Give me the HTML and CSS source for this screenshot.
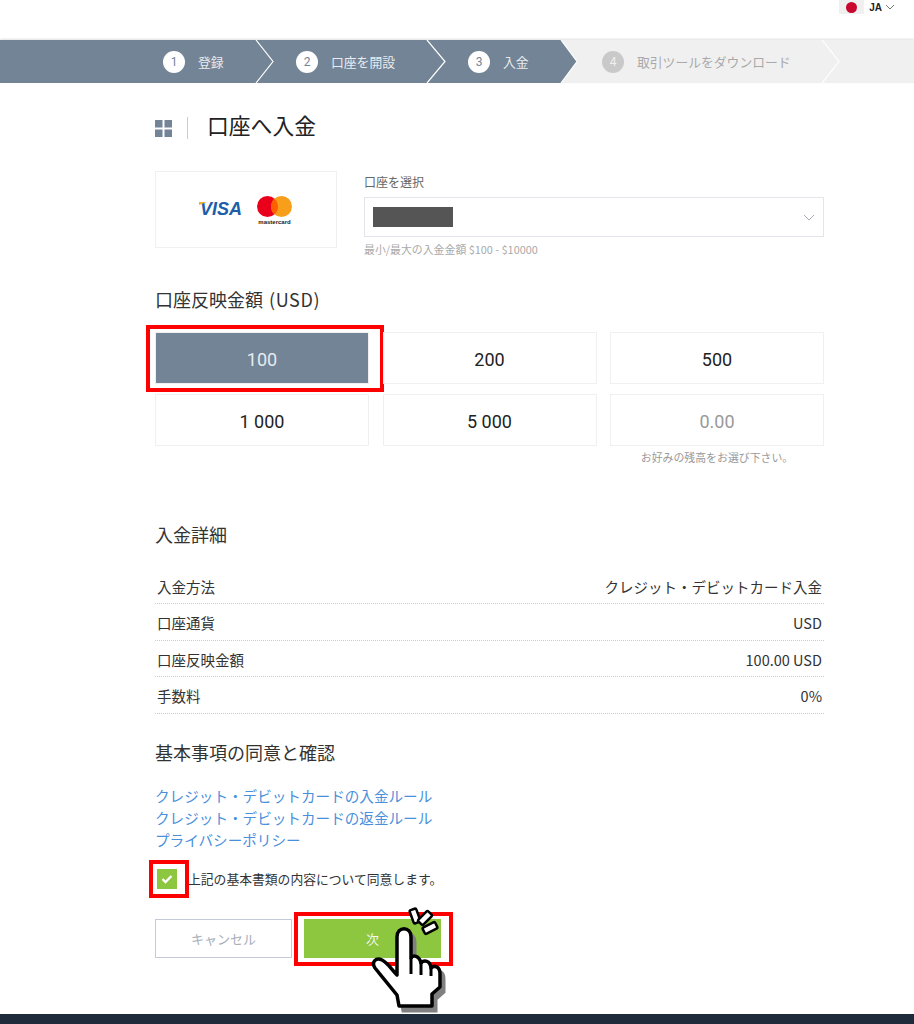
FILE: index.html
```html
<!DOCTYPE html>
<html lang="ja">
<head>
  <meta charset="UTF-8">
  <title>口座へ入金</title>
  <link rel="stylesheet" href="styles.css">
</head>
<body>
  <header class="topbar">
    <div class="lang">
      <span class="flag"><span class="flag-dot"></span></span>
      <span class="lang-code">JA</span>
      <svg class="lang-caret" width="10" height="6" viewBox="0 0 10 6"><path d="M1 1l4 4 4-4" fill="none" stroke="#777" stroke-width="1"/></svg>
    </div>
  </header>

  <!-- Step bar -->
  <nav class="steps">
    <svg class="steps-bg" width="914" height="43" viewBox="0 0 914 43">
      <rect width="914" height="43" fill="#f0f0f0"/>
      <path d="M0 0H561L577 21.5 561 43H0Z" fill="#738496"/>
      <path d="M256 0L273 21.5 256 43M427 0L445 21.5 427 43M561 0L577 21.5 561 43M822 0L839 21.5 822 43" fill="none" stroke="#fff" stroke-width="1.2"/>
    </svg>
    <div class="step step-1"><span class="step-num">1</span><span>登録</span></div>
    <div class="step step-2"><span class="step-num">2</span><span>口座を開設</span></div>
    <div class="step step-3"><span class="step-num">3</span><span>入金</span></div>
    <div class="step step-4 is-off"><span class="step-num">4</span><span>取引ツールをダウンロード</span></div>
  </nav>

  <main class="content">
    <div class="page-title">
      <svg class="title-icon" width="17" height="17" viewBox="0 0 17 17" fill="#738496">
        <rect width="7.5" height="7.5"/><rect x="9.5" width="7.5" height="7.5"/>
        <rect y="9.5" width="7.5" height="7.5"/><rect x="9.5" y="9.5" width="7.5" height="7.5"/>
      </svg>
      <span class="title-sep"></span>
      <h1>口座へ入金</h1>
    </div>

    <section class="account">
      <div class="card-logos">
        <span class="visa">VISA</span>
        <div class="mc">
          <svg width="35" height="21" viewBox="0 0 35 21">
            <circle cx="10.500" cy="10.500" r="10.500" fill="#eb001b"/>
            <circle cx="24.500" cy="10.500" r="10.500" fill="#f79e1b"/>
            <path d="M17.500 2.700a10.500 10.500 0 0 1 0 15.600a10.500 10.500 0 0 1 0-15.600Z" fill="#ff5f00"/>
          </svg>
          <span class="mc-name">mastercard</span>
        </div>
      </div>
      <div class="account-form">
        <label class="field-label">口座を選択</label>
        <div class="select">
          <span class="masked"></span>
          <svg width="12" height="7" viewBox="0 0 12 7"><path d="M1 1l5 5 5-5" fill="none" stroke="#aab" stroke-width="1"/></svg>
        </div>
        <p class="hint">最小/最大の入金金額 $100 - $10000</p>
      </div>
    </section>

    <h2 class="amount-heading">口座反映金額 <span class="amount-unit">(USD)</span></h2>
    <div class="amounts">
      <div class="tile is-selected">100<span class="mark mark-tile"></span></div>
      <div class="tile">200</div>
      <div class="tile">500</div>
      <div class="tile">1 000</div>
      <div class="tile">5 000</div>
      <div class="tile is-input">0.00</div>
    </div>
    <p class="amount-hint">お好みの残高をお選び下さい。</p>

    <h2 class="details-heading">入金詳細</h2>
    <div class="details">
      <div class="row"><span>入金方法</span><span>クレジット・デビットカード入金</span></div>
      <div class="row"><span>口座通貨</span><span>USD</span></div>
      <div class="row"><span>口座反映金額</span><span>100.00 USD</span></div>
      <div class="row"><span>手数料</span><span>0%</span></div>
    </div>

    <h2 class="agree-heading">基本事項の同意と確認</h2>
    <ul class="links">
      <li><a href="#">クレジット・デビットカードの入金ルール</a></li>
      <li><a href="#">クレジット・デビットカードの返金ルール</a></li>
      <li><a href="#">プライバシーポリシー</a></li>
    </ul>

    <div class="agree">
      <span class="check">
        <svg width="12" height="10" viewBox="0 0 12 10"><path d="M1.5 5l3 3 6-6" fill="none" stroke="#fff" stroke-width="2.4"/></svg>
        <span class="mark mark-check"></span>
      </span>
      <span>上記の基本書類の内容について同意します。</span>
    </div>

    <div class="actions">
      <button class="btn btn-cancel">キャンセル</button>
      <button class="btn btn-next">次<span class="mark mark-next"></span></button>
    </div>
  </main>

  <!-- Pointer annotation -->
  <svg class="hand" width="90" height="115" viewBox="365 900 90 115">
    <path transform="translate(4 5)" d="M397 975V937C397 926 411 926 411 937V958C413 955 419 955 421 963C424 960 430 960 431 968C434 965 440 966 440 974V987L432 994V1006H399L397 995L375 968C371 962 376 957 382 960C388 963 392 970 397 975Z" fill="#808080" stroke="#808080" stroke-width="3"/>
    <path d="M397 975V937C397 926 411 926 411 937V958C413 955 419 955 421 963C424 960 430 960 431 968C434 965 440 966 440 974V987L432 994V1006H399L397 995L375 968C371 962 376 957 382 960C388 963 392 970 397 975Z" fill="#fff" stroke="#000" stroke-width="3.500" stroke-linejoin="round"/>
    <path d="M411 958V974M421 963V975M431 968V976" fill="none" stroke="#000" stroke-width="3"/>
    <rect x="411.500" y="909" width="7" height="14" rx="1.500" transform="rotate(-20 415 916)" fill="#fff" stroke="#000" stroke-width="2.500"/>
    <rect x="421.500" y="911" width="7" height="14" rx="1.500" transform="rotate(45 425 918)" fill="#fff" stroke="#000" stroke-width="2.500"/>
    <rect x="426.500" y="921" width="7" height="14" rx="1.500" transform="rotate(63 430 928)" fill="#fff" stroke="#000" stroke-width="2.500"/>
  </svg>

  <footer class="footer"></footer>
</body>
</html>
```

FILE: styles.css
```css
* {
  box-sizing: border-box;
}
body {
  margin: 0;
  position: relative;
  background: #fff;
  color: #333;
  font-family: "Noto Sans CJK JP", "Noto Sans", sans-serif;
}
h1, h2, p, ul {
  margin: 0;
  padding: 0;
}

/* Top bar */
.topbar {
  height: 40px;
  display: flex;
  justify-content: flex-end;
  padding-right: 19px;
}
.lang {
  display: flex;
  align-items: center;
  height: 14px;
  gap: 5px;
}
.flag {
  width: 25px;
  height: 14px;
  background: #f0f0f0;
  display: flex;
  justify-content: center;
  align-items: center;
}
.flag-dot {
  width: 11px;
  height: 11px;
  border-radius: 50%;
  background: #c8082f;
}
.lang-code {
  font: bold 10px "Liberation Sans", sans-serif;
  color: #222;
}
.lang-caret {
  margin-left: -2px;
}

/* Steps */
.steps {
  position: relative;
  height: 43px;
  display: flex;
  font-size: 12.800px;
  color: #e8ecf0;
  box-shadow: 0 -1px 2px rgba(0,0,0,0.12);
}
.steps-bg {
  position: absolute;
  top: 0;
  left: 0;
}
.step {
  position: relative;
  display: flex;
  align-items: center;
  gap: 13px;
}
.step-1 { width: 256px; padding-left: 163px; }
.step-2 { width: 171px; padding-left: 40px; }
.step-3 { width: 134px; padding-left: 41px; }
.step-4 { padding-left: 41px; color: #a9a9a9; }
.step-num {
  width: 22px;
  height: 22px;
  border-radius: 50%;
  background: #fff;
  color: #738496;
  font: 12px Roboto, sans-serif;
  display: flex;
  align-items: center;
  justify-content: center;
}
.is-off .step-num {
  background: #c9c9c9;
  color: #f0f0f0;
}

.content {
  width: 669px;
  margin-left: 155px;
}

/* Title */
.page-title {
  display: flex;
  align-items: center;
  height: 22px;
  margin-top: 34px;
}
.title-sep {
  width: 1px;
  height: 22px;
  background: #c8ced6;
  margin: 0 19px 0 15px;
}
h1 {
  font-size: 21.800px;
  font-weight: 400;
  line-height: 22px;
  color: #222;
  margin-bottom: 6px;
}

/* Account */
.account {
  display: flex;
  gap: 27px;
  margin-top: 32px;
}
.card-logos {
  width: 182px;
  height: 77px;
  border: 1px solid #f0f0f0;
  display: flex;
  align-items: center;
  justify-content: center;
  gap: 15px;
}
.visa {
  position: relative;
  font: italic bold 18px "Liberation Sans", sans-serif;
  color: #1d5ea8;
}
/* yellow flick on the V */
.visa::before {
  content: "";
  position: absolute;
  left: -1px;
  top: 3px;
  border-top: 3px solid #f2ae2e;
  border-right: 8px solid transparent;
}
.mc {
  display: flex;
  flex-direction: column;
  align-items: center;
  margin-top: 2px;
}
.mc-name {
  font: bold 6px "Liberation Sans", sans-serif;
  color: #222;
  line-height: 6px;
  margin-top: 2px;
}
.account-form {
  flex: 1;
}
.field-label {
  display: block;
  font-size: 12px;
  line-height: 18px;
  height: 26px;
  color: #666;
  margin-top: 2px;
}
.select {
  height: 40px;
  margin-top: -2px;
  border: 1px solid #e3e5ec;
  display: flex;
  align-items: center;
  justify-content: space-between;
  padding: 0 8px;
}
.masked {
  width: 80px;
  height: 20px;
  background: #555;
}
.hint {
  font-size: 10.900px;
  line-height: 16px;
  color: #aaa;
  margin-top: 4px;
}

/* Amounts */
.amount-heading {
  font-size: 18px;
  font-weight: 400;
  line-height: 24px;
  color: #333;
  margin-top: 30px;
}
.amount-unit {
  margin-left: 2px;
  letter-spacing: 0.6px;
}
.amounts {
  display: grid;
  grid-template-columns: repeat(3, 214px);
  grid-auto-rows: 52px;
  column-gap: 13.500px;
  row-gap: 10px;
  margin-top: 21px;
}
.tile {
  position: relative;
  border: 1px solid #f0f0f0;
  display: flex;
  align-items: center;
  justify-content: center;
  padding-top: 2px;
  font: 18px Roboto, sans-serif;
  color: #222;
}
.tile.is-selected {
  background: #738496;
  color: #e6ebf0;
}
.tile.is-input {
  color: #999;
}
.amount-hint {
  width: 214px;
  margin-left: 455px;
  margin-top: 4px;
  text-align: center;
  font-size: 10.900px;
  line-height: 15px;
  color: #999;
}

/* Details */
.details-heading,
.agree-heading {
  font-size: 18px;
  font-weight: 400;
  line-height: 24px;
  color: #333;
}
.details-heading {
  margin-top: 57px;
}
.details {
  margin-top: 21.500px;
}
.row {
  height: 36.500px;
  display: flex;
  justify-content: space-between;
  align-items: center;
  padding: 2px 2px 0;
  font-size: 14.500px;
  border-bottom: 1px dotted #ccc;
}
.agree-heading {
  margin-top: 26px;
}

/* Links */
.links {
  list-style: none;
  margin-top: 21px;
}
.links li {
  height: 22px;
  line-height: 22px;
  font-size: 14.600px;
}
.links a {
  color: #4a8fdc;
  text-decoration: none;
}

/* Agreement */
.agree {
  display: flex;
  align-items: center;
  gap: 11px;
  margin-top: 18px;
  margin-left: 2px;
  font-size: 12.800px;
  color: #333;
  height: 20px;
}
.check {
  position: relative;
  width: 20px;
  height: 20px;
  background: #8dc63f;
  display: flex;
  align-items: center;
  justify-content: center;
}

/* Buttons */
.actions {
  display: flex;
  gap: 12px;
  margin-top: 30.500px;
}
.btn {
  width: 137px;
  height: 39px;
  font-family: inherit;
  font-size: 13px;
  position: relative;
}
.btn-cancel {
  background: #fff;
  border: 1px solid #c3cbd8;
  color: #a6aebb;
}
.btn-next {
  background: #8dc63f;
  border: none;
  color: #f4f8ea;
}

/* Red annotation frames */
.mark {
  position: absolute;
  border: 4px solid #f00;
  pointer-events: none;
}
.mark-tile {
  left: -10px;
  top: -8px;
  width: 238px;
  height: 67px;
}
.mark-check {
  left: -8px;
  top: -9px;
  width: 40px;
  height: 38px;
}
.mark-next {
  left: -10px;
  top: -7px;
  width: 159px;
  height: 54px;
}

.hand {
  position: absolute;
  left: 365px;
  top: 900px;
}

.footer {
  margin-top: 56px;
  height: 10px;
  background: #1f2a3a;
}
```
